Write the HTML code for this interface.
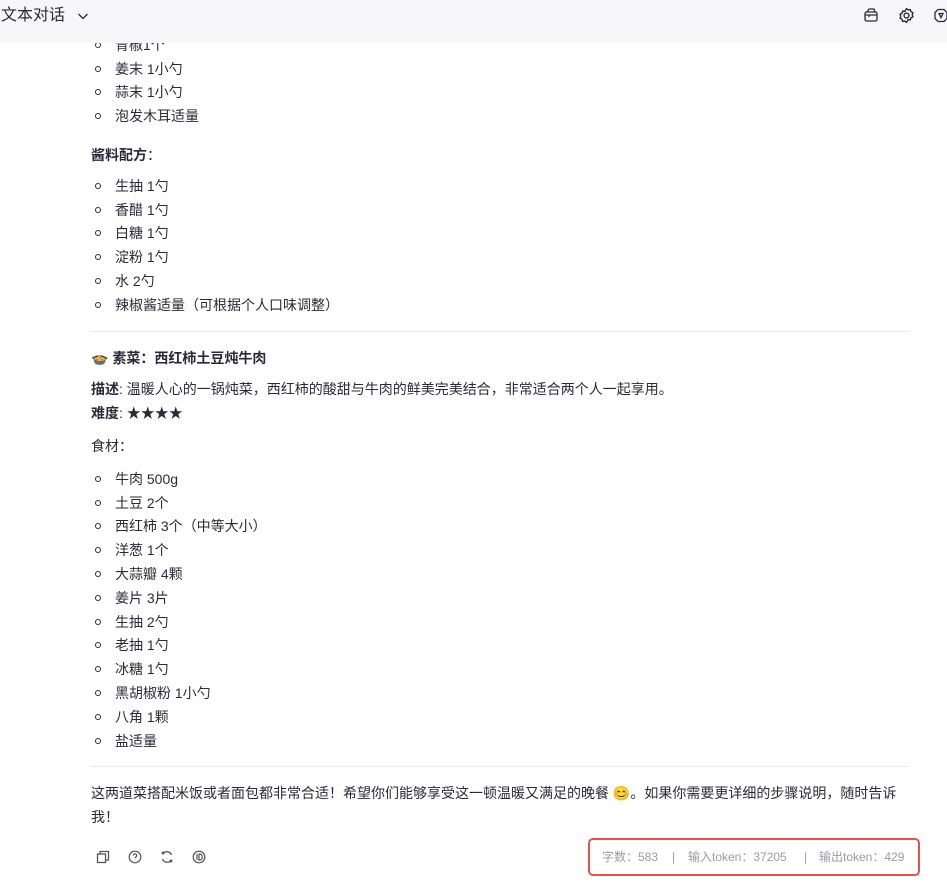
<!DOCTYPE html>
<html><head><meta charset="utf-8"><style>
body{margin:0;width:947px;height:891px;background:#fff;position:relative;overflow:hidden;font-family:"Liberation Sans","Noto Sans CJK SC",sans-serif;color:#2b2a3a;font-size:14px}
.h{position:absolute;left:0;top:0;width:947px;height:43px;background:#f7f7f9;z-index:2}
.t{position:absolute;line-height:20px;white-space:nowrap}
.li{left:115px}
.li::before{content:"";position:absolute;left:-20px;top:7px;width:4px;height:4px;border:1px solid #2b2a3a;border-radius:50%}
.hr{position:absolute;left:90px;width:818px;height:1px;background:#e8e8ec}
.g{position:absolute;top:847px;line-height:20px;font-size:12px;color:#9a9aa5;white-space:nowrap}
b{font-weight:bold}
svg{position:absolute}
</style></head><body>
<div class="h">
<div class="t" style="left:1px;top:6px;font-size:16px;color:#2b2a3a">文本对话</div>
<svg style="left:77px;top:11px" width="12" height="10" viewBox="0 0 12 10" fill="none" stroke="#2b2a3a" stroke-width="1.3"><path d="M1.5 3l4.5 4.5L10.5 3"/></svg>
<svg style="left:863px;top:7px" width="16" height="16" viewBox="0 0 16 16" fill="none" stroke="#2b2a3a" stroke-width="1.3"><rect x="2" y="5" width="12" height="9" rx="1.5"/><path d="M4 5L6 2h5l1 3M2 8h12M6 8v2"/></svg>
<svg style="left:898px;top:7px" width="17" height="17" viewBox="0 0 16 16" fill="none" stroke="#2b2a3a" stroke-width="1.3"><path d="M8 1.5l1.6 1.2 2-.2.6 1.9 1.8 1-.6 1.9.6 1.9-1.8 1-.6 1.9-2-.2L8 14.5l-1.6-1.2-2 .2-.6-1.9-1.8-1 .6-1.9-.6-1.900 1.8-1 .6-1.9 2 .2z"/><circle cx="8" cy="8" r="2.3"/></svg>
<svg style="left:933px;top:7px" width="16" height="17" viewBox="0 0 16 16" fill="none" stroke="#2b2a3a" stroke-width="1.3"><path d="M5 2h6l3 3v6l-3 3H5M5 2L2 5v6l3 3M6 6h4l-2 4z"/></svg>
</div>
<div class="t li" style="top:35px">青椒1个</div>
<div class="t li" style="top:59px">姜末 1小勺</div>
<div class="t li" style="top:82px">蒜末 1小勺</div>
<div class="t li" style="top:106px">泡发木耳适量</div>
<div class="t" style="left:91px;top:145px"><b>酱料配方</b>：</div>
<div class="t li" style="top:176px">生抽 1勺</div>
<div class="t li" style="top:200px">香醋 1勺</div>
<div class="t li" style="top:223px">白糖 1勺</div>
<div class="t li" style="top:247px">淀粉 1勺</div>
<div class="t li" style="top:271px">水 2勺</div>
<div class="t li" style="top:295px">辣椒酱适量（可根据个人口味调整）</div>
<div class="hr" style="top:331px"></div>
<div class="t" style="left:91px;top:348px">🍲 <b>素菜：西红柿土豆炖牛肉</b></div>
<div class="t" style="left:91px;top:379px"><b>描述</b>: 温暖人心的一锅炖菜，西红柿的酸甜与牛肉的鲜美完美结合，非常适合两个人一起享用。</div>
<div class="t" style="left:91px;top:403px"><b>难度</b>: ★★★★</div>
<div class="t" style="left:91px;top:436px">食材：</div>
<div class="t li" style="top:469px">牛肉 500g</div>
<div class="t li" style="top:493px">土豆 2个</div>
<div class="t li" style="top:516px">西红柿 3个（中等大小）</div>
<div class="t li" style="top:540px">洋葱 1个</div>
<div class="t li" style="top:564px">大蒜瓣 4颗</div>
<div class="t li" style="top:588px">姜片 3片</div>
<div class="t li" style="top:612px">生抽 2勺</div>
<div class="t li" style="top:635px">老抽 1勺</div>
<div class="t li" style="top:659px">冰糖 1勺</div>
<div class="t li" style="top:683px">黑胡椒粉 1小勺</div>
<div class="t li" style="top:707px">八角 1颗</div>
<div class="t li" style="top:731px">盐适量</div>
<div class="hr" style="top:766px"></div>
<div class="t" style="left:91px;top:783px">这两道菜搭配米饭或者面包都非常合适！希望你们能够享受这一顿温暖又满足的晚餐 😊。如果你需要更详细的步骤说明，随时告诉</div>
<div class="t" style="left:91px;top:807px">我！</div>
<svg style="left:96px;top:850px" width="14" height="14" viewBox="0 0 14 14" fill="none" stroke="#555" stroke-width="1.3"><rect x="1.5" y="4" width="8" height="8.5"/><path d="M4 4V1.5h8.5V10H9.5"/></svg>
<svg style="left:128px;top:850px" width="14" height="14" viewBox="0 0 14 14" fill="none" stroke="#555" stroke-width="1.2"><circle cx="7" cy="7" r="5.8"/><path d="M5.3 5.5a1.7 1.7 0 1 1 2.3 1.6c-.5.2-.6.6-.6 1.1M7 10v.3"/></svg>
<svg style="left:160px;top:850px" width="14" height="14" viewBox="0 0 14 14" fill="none" stroke="#555" stroke-width="1.3"><path d="M3 3.5A5 5 0 0 1 11.5 5M11 10.5A5 5 0 0 1 2.5 9"/><circle cx="3" cy="3" r=".8" fill="#555"/><circle cx="11" cy="11" r=".8" fill="#555"/></svg>
<svg style="left:192px;top:850px" width="14" height="14" viewBox="0 0 14 14" fill="none" stroke="#555" stroke-width="1.2"><circle cx="7" cy="7" r="5.8"/><path d="M5 4v6M7 4h.8a2.5 3 0 0 1 0 6H7z"/></svg>
<div style="position:absolute;left:588px;top:838px;width:328px;height:34px;border:2px solid #e5534b;border-radius:5px"></div>
<div class="g" style="left:602px">字数：583</div>
<div class="g" style="left:672px">|</div>
<div class="g" style="left:688px">输入token：37205</div>
<div class="g" style="left:804px">|</div>
<div class="g" style="left:819px">输出token：429</div>
</body></html>
